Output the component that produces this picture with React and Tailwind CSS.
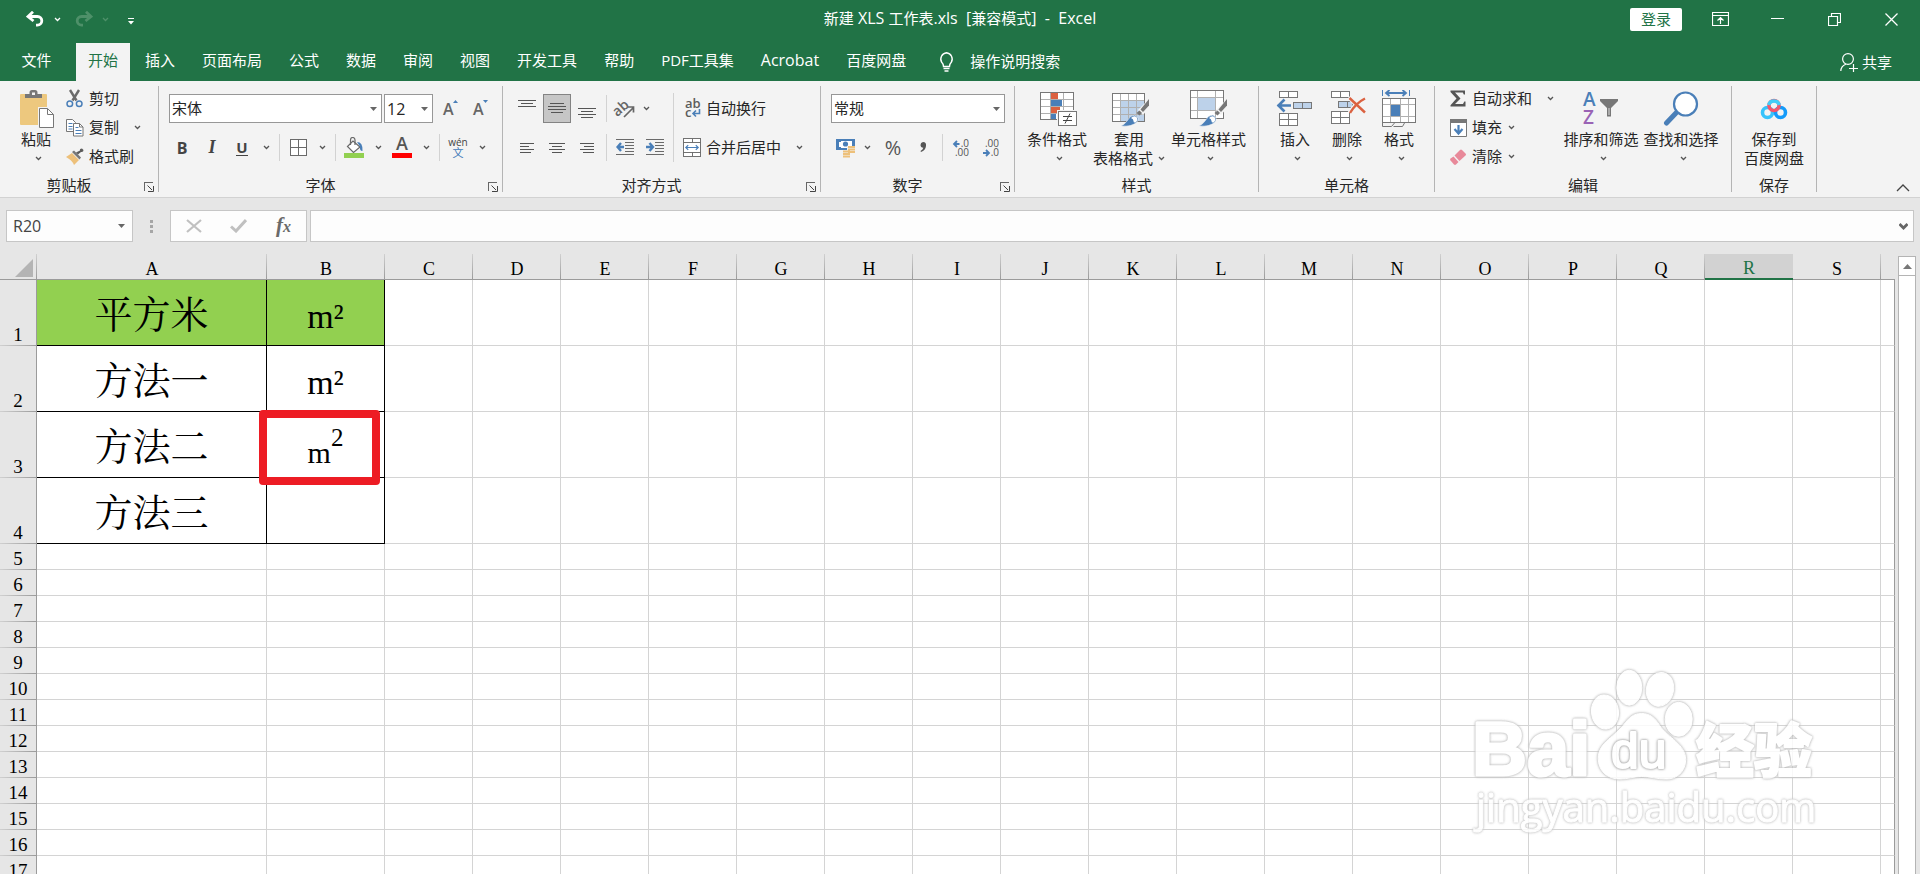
import React from "react";

const UI = "font-['Open_Sans','Noto_Sans_CJK_SC',sans-serif]";

/* ---------- small glyphs ---------- */

function Chevron({ className = "stroke-[#555555]" }) {
  return (
    <svg width="7" height="5" viewBox="0 0 7 5" fill="none" className={className} strokeWidth="1.3">
      <path d="M1 1l2.5 2.5L6 1" />
    </svg>
  );
}

function Triangle({ className = "fill-[#666666]" }) {
  return (
    <svg width="7" height="4" viewBox="0 0 7 4" className={className}>
      <path d="M0 0h7L3.500 4z" />
    </svg>
  );
}

/* ---------- ribbon building blocks ---------- */

function IconButton({ label, active, children }) {
  return (
    <button
      type="button"
      aria-label={label}
      aria-pressed={active ? true : undefined}
      className={
        active
          ? "mx-px flex h-[29px] w-7 shrink-0 items-center justify-center border border-[#838383] bg-[#c6c6c6]"
          : "flex h-[29px] w-[30px] shrink-0 items-center justify-center"
      }
    >
      {children}
    </button>
  );
}

function DropButton({ label, narrow }) {
  return (
    <button
      type="button"
      aria-label={label}
      className={
        narrow
          ? "mr-[5px] flex h-[29px] w-3 shrink-0 items-center justify-center"
          : "flex h-[29px] w-[18px] shrink-0 items-center justify-center"
      }
    >
      <Chevron />
    </button>
  );
}

function Divider() {
  return <div className="ml-1 mr-[3px] h-[27px] w-px shrink-0 bg-[#d2d2d2]" />;
}

function LineButton({ icon, label, arrow, wideArrow }) {
  return (
    <button type="button" className="flex h-[29px] items-center whitespace-nowrap">
      <span className="mr-[5px] flex w-[18px] justify-center">{icon}</span>
      {label}
      {arrow && (
        <span className={wideArrow ? "ml-[15px]" : "ml-[6px]"}>
          <Chevron />
        </span>
      )}
    </button>
  );
}

function LargeButton({ icon, label, second, arrow = true, className = "" }) {
  return (
    <button
      type="button"
      className={"flex shrink-0 flex-col items-center whitespace-nowrap pt-[6px] leading-[19px] " + className}
    >
      <span className="mb-[2px] flex h-[38px] items-center justify-center">{icon}</span>
      <span>{label}</span>
      <span className={second ? "flex h-[19px] items-center gap-[5px]" : "flex h-[19px] items-center pl-1"}>
        {second}
        {arrow && <Chevron />}
      </span>
    </button>
  );
}

function Group({ title, launcher, className = "", children }) {
  return (
    <>
      <section aria-label={title} className={"flex h-[110px] shrink-0 flex-col " + className}>
        <div className="flex flex-1">{children}</div>
        <div className="flex h-[18px] items-center leading-[18px]">
          <div className="flex-1 text-center">{title}</div>
          {launcher && (
            <button type="button" aria-label={title + "设置"} className="flex h-[18px] w-5 items-end justify-end pb-[2px] pr-1">
              <svg width="10" height="10" viewBox="0 0 10 10" fill="none" stroke="#666" shapeRendering="crispEdges">
                <path d="M.5 9V.5H9" />
                <path d="M3.500 3.500L8 8M9.500 4v5.500H4" shapeRendering="auto" stroke="#444" />
              </svg>
            </button>
          )}
        </div>
      </section>
      <div className="mt-[2px] h-[106px] w-px shrink-0 bg-[#b4b4b4]" />
    </>
  );
}

function Combo({ label, value, className }) {
  return (
    <div className={"relative " + className}>
      <select
        aria-label={label}
        defaultValue={value}
        className="h-[29px] w-full appearance-none border border-[#979797] bg-white pl-[2px] text-[#262626] outline-none"
      >
        <option>{value}</option>
      </select>
      <span className="pointer-events-none absolute right-[5px] top-[13px]">
        <Triangle />
      </span>
    </div>
  );
}

/* ---------- ribbon icons ---------- */

const PasteIcon = () => (
  <svg width="36" height="38" viewBox="-2 0 36 38">
    <rect x="0" y="4" width="27" height="31" rx="1" fill="#edc87e" />
    <path d="M5 8V4h4.500V2.500Q9.500 0 12 0h3q2.500 0 2.500 2.500V4H22v4z" fill="#777" />
    <rect x="12" y="2.500" width="3" height="2.500" fill="#f3f3f3" />
    <path d="M18 17h10l7 7v15H18z" fill="#f3f3f3" />
    <path d="M19.500 18.500h8l6 6v13h-14z" fill="#fff" stroke="#777" />
    <path d="M27.500 18.500v6h6" fill="none" stroke="#777" />
  </svg>
);

const CutIcon = () => (
  <svg width="18" height="19" viewBox="0 0 18 19" fill="none">
    <path d="M4 1l6.500 10.500M13 1L6.500 11.500" stroke="#6a6a6a" strokeWidth="2.400" />
    <circle cx="3.800" cy="14.800" r="2.800" stroke="#4a7fb8" strokeWidth="1.500" />
    <circle cx="13.200" cy="14.800" r="2.800" stroke="#4a7fb8" strokeWidth="1.500" />
  </svg>
);

const CopyIcon = () => (
  <svg width="18" height="19" viewBox="0 0 18 19">
    <path d="M.5 1.500h6l3 3v9h-9z" fill="#fff" stroke="#777" />
    <path d="M2.500 5.500h4M2.500 8.500h4M2.500 11h4" stroke="#4a7fb8" />
    <path d="M7.500 5.500h6l3.500 3.500v9H7.500z" fill="#fff" stroke="#777" />
    <path d="M13.500 5.500V9H17" fill="none" stroke="#777" />
    <path d="M9.500 9.500h3M9.500 12.500h6M9.500 15.500h6" stroke="#4a7fb8" />
  </svg>
);

const BrushIcon = () => (
  <svg width="18" height="17" viewBox="0 0 18 17">
    <path d="M0 9l6-4 7 7-5 5Q6 12 0 9z" fill="#edc07a" />
    <path d="M6 4l2-1.500 7 7-1.500 2z" fill="#777" />
    <path d="M10 4.500l2 2 3-2.500q2.500.5 2.500-2L16 .5q-2.500 0-2 2z" fill="#5c5c5c" />
  </svg>
);

function FontSizeIcon({ up }) {
  return (
    <svg width="16" height="20" viewBox="0 0 16 20" className="overflow-visible">
      <text x="0" y="16" fontSize="16" fontWeight="600" fill="#666" className={UI}>A</text>
      <path d={up ? "M10 4h5L12.500 1z" : "M10 1h5L12.500 4z"} fill="#4a7fb8" />
    </svg>
  );
}

const BorderIcon = () => (
  <svg width="17" height="17" viewBox="0 0 17 17" shapeRendering="crispEdges">
    <path d="M.5 .5h16v16H.5zM.5 8.500h16M8.500 .5v16" fill="#fff" stroke="#6a6a6a" />
  </svg>
);

const FillIcon = () => (
  <svg width="20" height="21" viewBox="0 0 20 21">
    <path d="M3.500 9.500L9 4l7 6-6.500 5.500z" fill="#fff" stroke="#6a6a6a" strokeWidth="1.200" />
    <path d="M6.500 8V3q0-2.500 2.200-2.500T11 3v5" fill="none" stroke="#6a6a6a" strokeWidth="1.200" />
    <path d="M13 5q6 0 5.500 9-3 0-2.500-4.500z" fill="#4a7fb8" />
    <rect x="0" y="16" width="20" height="5" fill="#92d050" />
  </svg>
);

const FontColorIcon = () => (
  <svg width="20" height="21" viewBox="0 0 20 21" className="overflow-visible">
    <text x="10" y="13" textAnchor="middle" fontSize="18" fontWeight="600" fill="#555" className={UI}>A</text>
    <rect x="0" y="16" width="20" height="5" fill="#ff0000" />
  </svg>
);

const PinyinIcon = () => (
  <span className="flex flex-col items-center text-[10px] leading-[9px] text-[#444444]">
    <span>wén</span>
    <span className="text-[11px] leading-[11px] text-[#3f7ab8]">文</span>
  </span>
);

function AlignIcon({ lines, height = 18 }) {
  return (
    <svg width="18" height={height} viewBox={"0 0 18 " + height} stroke="#555" shapeRendering="crispEdges">
      {lines.map(([x1, x2, y]) => (
        <path key={y} d={"M" + x1 + " " + (y + 0.5) + "H" + x2} />
      ))}
    </svg>
  );
}

const ALIGN = {
  top: [[0, 18, 0], [3, 15, 3], [0, 18, 6]],
  middle: [[2, 16, 3], [0, 18, 6], [0, 18, 9], [3, 15, 12]],
  bottom: [[0, 18, 8], [3, 15, 11], [0, 18, 14], [3, 15, 17]],
  left: [[2, 16, 4], [2, 11, 7], [2, 16, 10], [2, 13, 13]],
  center: [[1, 17, 4], [4, 14, 7], [1, 17, 10], [4, 14, 13]],
  right: [[2, 16, 4], [6, 16, 7], [2, 16, 10], [5, 16, 13]],
};

const OrientIcon = () => (
  <svg width="20" height="20" viewBox="0 0 20 20" className="overflow-visible">
    <text x="0" y="16" fontSize="14" fontWeight="600" fill="#666" transform="rotate(-42 4 14)" className={UI}>ab</text>
    <path d="M9 18L18.500 8.500M13 8h5.500v5.500" fill="none" stroke="#666" strokeWidth="1.700" />
  </svg>
);

function IndentIcon({ out }) {
  return (
    <svg width="19" height="17" viewBox="0 0 19 17">
      <path d="M0 .5h18M9 3.500h9M9 6.500h9M9 9.500h9M9 12.500h9M0 15.500h18" stroke="#6a6a6a" shapeRendering="crispEdges" />
      <path d={out ? "M1.500 8H8M5 4L1.500 8L5 12" : "M0 8h6.500M3.500 4L7 8l-3.500 4"} fill="none" stroke="#4a7fb8" strokeWidth="2.400" />
    </svg>
  );
}

const WrapIcon = () => (
  <svg width="18" height="18" viewBox="0 0 18 18" className="overflow-visible">
    <text x="2" y="8" fontSize="13" fontWeight="600" fill="#5c5c5c" className={UI}>ab</text>
    <text x="2" y="17" fontSize="13" fontWeight="600" fill="#5c5c5c" className={UI}>c</text>
    <path d="M16.500 9v4.500H10M13 10.500l-3 3 3 3" fill="none" stroke="#4a7fb8" strokeWidth="1.600" />
  </svg>
);

const MergeIcon = () => (
  <svg width="19" height="19" viewBox="0 0 19 19">
    <path d="M.5 .5h18v18H.5zM.5 4.500h18M.5 14.500h18M9.500 .5v4M9.500 14.500v4" fill="#fff" stroke="#6a6a6a" shapeRendering="crispEdges" />
    <path d="M3 9.500h13M5.500 7L3 9.500 5.500 12M13.500 7L16 9.500 13.500 12" fill="none" stroke="#4a7fb8" strokeWidth="1.300" />
  </svg>
);

const MoneyIcon = () => (
  <svg width="20" height="20" viewBox="0 0 20 20">
    <rect x="0" y="1" width="19" height="11" fill="#4a7fb8" />
    <path d="M3 3h13v7H3z" fill="#fff" />
    <circle cx="9.500" cy="6" r="2.600" fill="#4a7fb8" />
    <path d="M2 2h3v2H2zM2 9h3v2H2z" fill="#4a7fb8" />
    <path d="M11 8h9v9h-5v3H6v-8h5z" fill="#f3f3f3" />
    <path d="M12 9h7M12 11.500h7M12 14h7M7 13.500h7M7 16h7M7 18.500h7" stroke="#edc07a" strokeWidth="1.800" />
  </svg>
);

function DecimalIcon({ more }) {
  return (
    <svg width="18" height="18" viewBox="0 0 18 18" className={"overflow-visible " + UI} fontSize="10" fill="#555">
      <text x="17" y="8" textAnchor="end">{more ? ".0" : ".00"}</text>
      <text x="17" y="17" textAnchor="end">{more ? ".00" : ".0"}</text>
      <path d={more ? "M7.500 5H2.500M5 2L2 5l3 3" : "M1 14h5M4 11l3 3-3 3"} fill="none" stroke="#4a7fb8" strokeWidth="1.800" />
    </svg>
  );
}

const ConditionalIcon = () => (
  <svg width="42" height="34" viewBox="-4 0 42 34" shapeRendering="crispEdges">
    <path d="M.5 .5h33v27H.5z" fill="#fff" />
    <path d="M.5 7.500h33M.5 14.500h33M.5 21.500h33M10.500 .5v27M23.500 .5v27" stroke="#b0b0b0" fill="none" />
    <path d="M.5 .5h33v27H.5z" fill="none" stroke="#777" />
    <path d="M11 1h7v6h-7zM11 15h9v6h-9z" fill="#db6140" />
    <path d="M11 8h11v6H11zM11 22h5v5h-5z" fill="#4a7fb8" />
    <path d="M17 18h21v17H17z" fill="#f3f3f3" />
    <path d="M18.500 19.500h18v14h-18z" fill="#fff" stroke="#777" />
    <path d="M23 24.500h9M23 28.500h9M30 21.500l-5 10" stroke="#444" fill="none" shapeRendering="auto" />
  </svg>
);

const BrushOverlay = () => (
  <g>
    <path d="M38 8L26 20l5 5 7-8z" fill="#f3f3f3" />
    <path d="M37 9v6.500L31 22l-2.500-2.500z" fill="#777" />
    <path d="M27.500 20.500l2.500 2.500-2.500 2.500-3-2.500z" fill="#777" />
    <path d="M9 36q4-2 6-5 3-6 8-6 5 3 2 7-5 5-16 4z" fill="#4a7fb8" stroke="#f3f3f3" strokeWidth=".6" />
    <path d="M19 28q3-3 5.500-1 2 3-1 5.500-2 .5-2-1.500t-2.500-3z" fill="#fff" />
  </g>
);

const TableFormatIcon = () => (
  <svg width="42" height="38" viewBox="-4 0 42 38">
    <g shapeRendering="crispEdges">
      <path d="M.5 3.500h32v28H.5z" fill="#fff" />
      <path d="M9 11h23v20H9z" fill="#bdd2ea" />
      <path d="M.5 10.500h32M.5 17.500h32M.5 24.500h32M8.500 3.500v28M16.500 3.500v28M24.500 3.500v28" stroke="#b0b0b0" fill="none" />
      <path d="M.5 3.500h32v28H.5z" fill="none" stroke="#777" />
    </g>
    <BrushOverlay />
  </svg>
);

const CellStyleIcon = () => (
  <svg width="38" height="38" viewBox="0 0 38 38">
    <g shapeRendering="crispEdges">
      <path d="M.5 .5h33v28H.5z" fill="#fff" />
      <path d="M.5 7.500h33M.5 20.500h33M7.500 .5v28M25.500 .5v28" stroke="#b0b0b0" fill="none" />
      <path d="M8 8h17v12H8z" fill="#bdd2ea" />
      <path d="M.5 .5h33v28H.5z" fill="none" stroke="#777" />
    </g>
    <BrushOverlay />
  </svg>
);

const InsertIcon = () => (
  <svg width="40" height="38" viewBox="0 0 40 38">
    <g shapeRendering="crispEdges" fill="#fff" stroke="#777">
      <path d="M4.500 1.500h18v6h-18zM13.500 1.500v6M4.500 23.500h18v12h-18zM4.500 29.500h18M13.500 23.500v12" />
      <path d="M18.500 12.500h18v6h-18zM27.500 12.500v6" fill="#bdd2ea" />
    </g>
    <path d="M2.500 15.500H16M9.500 9.500l-6 6 6 6" fill="none" stroke="#4a7fb8" strokeWidth="2.600" />
  </svg>
);

const DeleteIcon = () => (
  <svg width="40" height="38" viewBox="-2 0 40 38">
    <g shapeRendering="crispEdges" fill="#fff" stroke="#777">
      <path d="M2.500 1.500h18v6h-18zM11.500 1.500v6M2.500 21.500h18v12h-18zM2.500 27.500h18M11.500 21.500v12" />
      <path d="M9.500 11.500h14v6h-14zM18.500 11.500v6" fill="#bdd2ea" />
    </g>
    <path d="M20 7l16 16M36 7q-9 6-15 16" fill="none" stroke="#f3f3f3" strokeWidth="5" />
    <path d="M20.500 8L36 22.500" stroke="#db6140" strokeWidth="2.400" />
    <path d="M36 8.500Q27 13 21 23" fill="none" stroke="#db6140" strokeWidth="2.400" />
  </svg>
);

const FormatIcon = () => (
  <svg width="34" height="38" viewBox="0 0 34 38">
    <g shapeRendering="crispEdges">
      <path d="M.5 8.500h33v24H.5z" fill="#fff" />
      <path d="M.5 14.500h33M.5 26.500h33M8.500 8.500v24M18.500 8.500v24M26.500 8.500v24" stroke="#b0b0b0" fill="none" />
      <path d="M.5 8.500h33v24H.5z" fill="none" stroke="#777" />
      <path d="M9 15h9v11H9z" fill="#4a7fb8" />
      <path d="M.5 0v6M27.500 0v6" stroke="#4a7fb8" />
    </g>
    <path d="M4 3h20M7.500 0L4 3l3.500 3M20.500 0L24 3l-3.500 3" fill="none" stroke="#4a7fb8" strokeWidth="1.800" />
    <path d="M.5 33v3.500h9l3-3.500M11.500 36.500h9l2-3.500" fill="none" stroke="#777" />
  </svg>
);

const SumIcon = () => (
  <svg width="16" height="17" viewBox="0 0 16 17">
    <path d="M.5 .5h14.500v4h-1.200l-1-2H5l5.500 6L5 14h8l1.300-2.500h1.200v5H.5v-1.200l6-6.800L.5 2z" fill="#555" />
  </svg>
);

const FillDownIcon = () => (
  <svg width="17" height="18" viewBox="0 0 17 18">
    <path d="M.5 .5h16v17H.5z" fill="#fff" stroke="#777" />
    <path d="M0 0h17v4H0z" fill="#777" />
    <path d="M8.500 6v8M4.500 10l4 4.500 4-4.500" fill="none" stroke="#4a7fb8" strokeWidth="2.200" />
  </svg>
);

const EraserIcon = () => (
  <svg width="16" height="16" viewBox="0 0 16 16" fill="#e8899a">
    <path d="M4.500 6.500L10 1q1-1 2 0l3.500 3.500q1 1 0 2L9.500 12z" />
    <path d="M3.500 7.500l5 5.500L6 15.500q-1 .8-2 0L.5 11.500q-.8-1 0-2z" />
  </svg>
);

const SortIcon = () => (
  <svg width="36" height="34" viewBox="0 0 36 34" className={"overflow-visible " + UI}>
    <text x="0" y="14" fontSize="19" fontWeight="600" fill="#4a7fb8">A</text>
    <text x="0" y="32" fontSize="19" fontWeight="600" fill="#9a63b5">Z</text>
    <path d="M17 7h18v2l-7 7v8.500h-4V16l-7-7z" fill="#777" />
    <path d="M26 16v7" stroke="#ddd" />
  </svg>
);

const FindIcon = () => (
  <svg width="36" height="36" viewBox="0 0 36 36">
    <path d="M13 22L3.500 32" stroke="#4a7fb8" strokeWidth="5" strokeLinecap="round" />
    <circle cx="22.500" cy="13" r="11.500" fill="#fff" stroke="#4a7fb8" strokeWidth="2.200" />
  </svg>
);

const CloudIcon = () => (
  <svg width="28" height="22" viewBox="0 0 28 22" fill="none" strokeWidth="3.600">
    <circle cx="7.500" cy="14.500" r="5" stroke="#37c3fb" />
    <circle cx="20.500" cy="14.500" r="5" stroke="#149bfa" />
    <circle cx="14" cy="7.500" r="5" stroke="#f4566c" />
    <path d="M8.700 7a5.500 5.500 0 0 1 10.600 0" stroke="#41cdf8" />
  </svg>
);

/* ---------- page sections ---------- */

function TitleBar() {
  return (
    <div className="grid h-[38px] grid-cols-[1fr_auto_1fr] items-center">
      <div className="flex items-center pl-[26px]">
        <button type="button" aria-label="撤消">
          <svg width="19" height="16" viewBox="0 0 19 16" fill="none" stroke="#fff" strokeWidth="2.800">
            <path d="M2 5.500h9.500a4.300 4.300 0 0 1 0 8.600H10M7 .8L2 5.500 7.500 10" />
          </svg>
        </button>
        <button type="button" aria-label="撤消列表" className="ml-[9px]">
          <Chevron className="stroke-white" />
        </button>
        <button type="button" aria-label="恢复" className="ml-[13px]">
          <svg width="19" height="16" viewBox="0 0 19 16" fill="none" stroke="#4e9069" strokeWidth="2.800">
            <path d="M17 5.500H7.500a4.300 4.300 0 0 0 0 8.600H9M12 .8l5 4.700-5.500 4.500" />
          </svg>
        </button>
        <button type="button" aria-label="恢复列表" className="ml-[9px]">
          <Chevron className="stroke-[#4e9069]" />
        </button>
        <button type="button" aria-label="自定义快速访问工具栏" className="ml-[19px] mt-[5px]">
          <svg width="6" height="7" viewBox="0 0 6 7" fill="#fff">
            <path d="M0 0h6v1H0zM0 3h6L3 6.500z" />
          </svg>
        </button>
      </div>
      <h1 className="whitespace-pre pb-[2px] leading-5 text-white">
        新建<span className="text-base leading-5"> XLS </span>工作表
        <span className="text-base leading-5">.xls  [</span>兼容模式
        <span className="text-base leading-5">]  -  Excel</span>
      </h1>
      <div className="flex items-center justify-end text-white">
        <button type="button" className="mr-[10px] h-[23px] w-[52px] rounded-[2px] bg-white leading-[22px] text-[#217346]">
          登录
        </button>
        <button type="button" aria-label="功能区显示选项" className="flex h-[38px] w-[57px] items-center justify-center">
          <svg width="17" height="14" viewBox="0 0 17 14" fill="none" stroke="currentColor">
            <path d="M.5 .5h16v13H.5zM.5 3.500h16M8.500 12V5.500M5.500 8.500l3-3 3 3" strokeWidth="1.200" />
          </svg>
        </button>
        <button type="button" aria-label="最小化" className="flex h-[38px] w-[57px] items-center justify-center">
          <svg width="13" height="2" viewBox="0 0 13 2" fill="currentColor">
            <path d="M0 0h13v1H0z" />
          </svg>
        </button>
        <button type="button" aria-label="还原" className="flex h-[38px] w-[57px] items-center justify-center">
          <svg width="13" height="13" viewBox="0 0 13 13" fill="none" stroke="currentColor" strokeWidth="1.200">
            <path d="M.5 3.500h9v9h-9zM3.500 3.500v-3h9v9h-3" />
          </svg>
        </button>
        <button type="button" aria-label="关闭" className="flex h-[38px] w-[57px] items-center justify-center">
          <svg width="13" height="13" viewBox="0 0 13 13" fill="none" stroke="currentColor" strokeWidth="1.300">
            <path d="M.5 .5l12 12M12.500 .5l-12 12" />
          </svg>
        </button>
      </div>
    </div>
  );
}

const TABS = ["开始", "插入", "页面布局", "公式", "数据", "审阅", "视图", "开发工具", "帮助", "PDF工具集", "Acrobat", "百度网盘"];

function tabClass(tab) {
  if (tab === "开始") return "ml-[3px] h-[38px] bg-[#f3f3f3] px-3 pb-1 text-[#217346]";
  if (tab === "Acrobat") return "ml-[3px] h-[38px] px-3 pb-1 text-base";
  return "ml-[3px] h-[38px] px-3 pb-1";
}

function TabBar() {
  return (
    <nav className="flex items-stretch whitespace-nowrap pt-[5px] text-white">
      <button type="button" className="h-[38px] w-[73px] pb-1">文件</button>
      {TABS.map((tab) => (
        <button key={tab} type="button" aria-current={tab === "开始" ? "page" : undefined} className={tabClass(tab)}>
          {tab}
        </button>
      ))}
      <button type="button" className="ml-[21px] flex h-[38px] items-center gap-4 pb-px">
        <svg width="15" height="20" viewBox="0 0 15 20" fill="none" stroke="#fff" strokeWidth="1.400">
          <path d="M4.500 14.500q0-2.500-1.800-4.200A6.300 6.300 0 0 1 7.500.8a6.300 6.300 0 0 1 4.800 9.500Q10.500 12 10.500 14.500z" />
          <path d="M4.500 16.500h6M5.500 19h4" strokeWidth="1.600" />
        </svg>
        操作说明搜索
      </button>
      <button type="button" className="ml-auto mr-7 flex h-[38px] items-center gap-1">
        <svg width="18" height="19" viewBox="0 0 18 19" fill="none" stroke="#fff" strokeWidth="1.200">
          <circle cx="8" cy="6" r="5.400" />
          <path d="M.8 18q.2-5 5-6.800M9 15.500h9M13.500 11v8" />
        </svg>
        共享
      </button>
    </nav>
  );
}

function Ribbon() {
  return (
    <div className="flex overflow-hidden border-b border-[#d2d2d2] bg-[#f3f3f3] pb-[3px] pt-[3px] text-[#262626]">
      <Group title="剪贴板" launcher className="w-[158px]">
        <LargeButton icon={<PasteIcon />} label="粘贴" className="ml-3 w-12" />
        <div className="ml-[6px] flex flex-col">
          <LineButton icon={<CutIcon />} label="剪切" />
          <LineButton icon={<CopyIcon />} label="复制" arrow wideArrow />
          <LineButton icon={<BrushIcon />} label="格式刷" />
        </div>
      </Group>

      <Group title="字体" launcher className="w-[343px]">
        <div className="flex flex-col gap-[10px] pl-2 pt-[10px]">
          <div className="flex items-center pl-[2px]">
            <Combo label="字体" value="宋体" className="w-[213px]" />
            <Combo label="字号" value="12" className="ml-[2px] w-[49px] text-base" />
            <span className="ml-[3px] flex">
              <IconButton label="增大字号"><FontSizeIcon up /></IconButton>
              <IconButton label="减小字号"><FontSizeIcon /></IconButton>
            </span>
          </div>
          <div className="flex items-center text-[#444444]">
            <IconButton label="加粗"><b className="text-base">B</b></IconButton>
            <IconButton label="倾斜">
              <b className="font-['Liberation_Serif',serif] text-[18px] italic">I</b>
            </IconButton>
            <IconButton label="下划线">
              <b className="border-b border-[#444444] text-[15px] leading-4">U</b>
            </IconButton>
            <DropButton label="下划线样式" />
            <Divider />
            <IconButton label="边框"><BorderIcon /></IconButton>
            <DropButton label="边框样式" />
            <Divider />
            <IconButton label="填充颜色"><FillIcon /></IconButton>
            <DropButton label="更多填充颜色" />
            <IconButton label="字体颜色"><FontColorIcon /></IconButton>
            <DropButton label="更多字体颜色" />
            <Divider />
            <IconButton label="拼音字段"><PinyinIcon /></IconButton>
            <DropButton label="拼音设置" />
          </div>
        </div>
      </Group>

      <Group title="对齐方式" launcher className="w-[317px]">
        <div className="flex flex-col gap-[10px] pl-[9px] pt-[10px]">
          <div className="flex items-center">
            <IconButton label="顶端对齐"><span className="pb-[10px]"><AlignIcon lines={ALIGN.top} height={8} /></span></IconButton>
            <IconButton label="垂直居中" active><AlignIcon lines={ALIGN.middle} /></IconButton>
            <IconButton label="底端对齐"><AlignIcon lines={ALIGN.bottom} /></IconButton>
            <Divider />
            <IconButton label="方向"><OrientIcon /></IconButton>
            <DropButton label="方向选项" narrow />
          </div>
          <div className="flex items-center">
            <IconButton label="左对齐"><AlignIcon lines={ALIGN.left} /></IconButton>
            <IconButton label="居中"><AlignIcon lines={ALIGN.center} /></IconButton>
            <IconButton label="右对齐"><AlignIcon lines={ALIGN.right} /></IconButton>
            <Divider />
            <IconButton label="减少缩进量"><IndentIcon out /></IconButton>
            <IconButton label="增加缩进量"><IndentIcon /></IconButton>
          </div>
        </div>
        <div className="ml-[3px] mt-[9px] h-[69px] w-px bg-[#d2d2d2]" />
        <div className="flex flex-col gap-[10px] pl-[9px] pt-[10px]">
          <LineButton icon={<WrapIcon />} label="自动换行" />
          <div className="flex items-center">
            <LineButton icon={<MergeIcon />} label="合并后居中" />
            <span className="ml-[9px] flex"><DropButton label="合并选项" /></span>
          </div>
        </div>
      </Group>

      <Group title="数字" launcher className="w-[193px]">
        <div className="flex flex-col gap-[10px] pl-[10px] pt-[10px]">
          <Combo label="数字格式" value="常规" className="w-[174px]" />
          <div className="flex items-center text-[#555555]">
            <IconButton label="会计数字格式"><MoneyIcon /></IconButton>
            <DropButton label="更多会计格式" narrow />
            <IconButton label="百分比样式"><span className="text-[20px]">%</span></IconButton>
            <IconButton label="千位分隔样式">
              <svg width="7" height="11" viewBox="0 0 7 11" fill="#555">
                <path d="M3 0q3.500 0 3 4-.5 4.500-5 6l-.5-1q2.500-1.200 2.800-3.200Q.5 5.500.5 3T3 0z" />
              </svg>
            </IconButton>
            <Divider />
            <IconButton label="增加小数位数"><DecimalIcon more /></IconButton>
            <IconButton label="减少小数位数"><DecimalIcon /></IconButton>
          </div>
        </div>
      </Group>

      <Group title="样式" className="w-[243px]">
        <LargeButton icon={<ConditionalIcon />} label="条件格式" className="ml-2 w-[68px]" />
        <LargeButton icon={<TableFormatIcon />} label="套用" second="表格格式" className="w-[76px]" />
        <LargeButton icon={<CellStyleIcon />} label="单元格样式" className="w-[83px]" />
      </Group>

      <Group title="单元格" className="w-[175px]">
        <LargeButton icon={<InsertIcon />} label="插入" className="ml-[10px] w-[52px]" />
        <LargeButton icon={<DeleteIcon />} label="删除" className="w-[52px]" />
        <LargeButton icon={<FormatIcon />} label="格式" className="w-[52px]" />
      </Group>

      <Group title="编辑" className="w-[296px]">
        <div className="ml-[14px] flex w-[110px] flex-col items-start">
          <LineButton icon={<SumIcon />} label="自动求和" arrow wideArrow />
          <LineButton icon={<FillDownIcon />} label="填充" arrow />
          <LineButton icon={<EraserIcon />} label="清除" arrow />
        </div>
        <LargeButton icon={<SortIcon />} label="排序和筛选" className="ml-[2px] w-20" />
        <LargeButton icon={<FindIcon />} label="查找和选择" className="w-20" />
      </Group>

      <Group title="保存" className="w-[84px]">
        <LargeButton icon={<CloudIcon />} label="保存到" second="百度网盘" arrow={false} className="w-[84px]" />
      </Group>

      <button type="button" aria-label="折叠功能区" className="ml-auto mr-[10px] self-end pb-[2px]">
        <svg width="14" height="8" viewBox="0 0 14 8" fill="none" stroke="#444" strokeWidth="1.300">
          <path d="M1 7l6-6 6 6" />
        </svg>
      </button>
    </div>
  );
}

function FormulaBar() {
  return (
    <div className="flex items-center bg-[#e6e6e6] px-[6px] py-3">
      <div className="flex h-8 w-[127px] items-center border border-[#c6c6c6] bg-[#fdfdfd]">
        <input
          aria-label="名称框"
          defaultValue="R20"
          className="h-full w-0 flex-1 bg-transparent pl-[6px] text-base text-[#444444] outline-none"
        />
        <button type="button" aria-label="名称列表" className="flex h-full w-[22px] items-center justify-center">
          <Triangle />
        </button>
      </div>
      <svg width="3" height="13" viewBox="0 0 3 13" fill="#a6a6a6" className="mx-[17px]">
        <path d="M0 0h3v3H0zM0 5h3v3H0zM0 10h3v3H0z" />
      </svg>
      <div className="flex h-8 w-[137px] items-center justify-around border border-[#c6c6c6] bg-[#fdfdfd]">
        <button type="button" aria-label="取消" className="flex w-9 justify-center">
          <svg width="16" height="14" viewBox="0 0 16 14" fill="none" stroke="#c0c0c0" strokeWidth="2.200">
            <path d="M1 1l14 12M15 1L1 13" />
          </svg>
        </button>
        <button type="button" aria-label="输入" className="flex w-9 justify-center">
          <svg width="17" height="14" viewBox="0 0 17 14" fill="none" stroke="#c0c0c0" strokeWidth="3">
            <path d="M1 7.500l5 4.500L16 1" />
          </svg>
        </button>
        <button
          type="button"
          aria-label="插入函数"
          className="flex w-9 items-baseline justify-center font-['Liberation_Serif',serif] text-[21px] font-bold italic leading-6 text-[#6a6a6a]"
        >
          <span>f</span>
          <span className="text-base">x</span>
        </button>
      </div>
      <div className="ml-[3px] flex h-8 min-w-0 flex-1 items-center border border-[#c6c6c6] bg-[#fdfdfd]">
        <input aria-label="编辑栏" className="h-full w-0 flex-1 bg-transparent px-2 outline-none" />
        <button type="button" aria-label="展开编辑栏" className="flex h-full w-5 items-center justify-center">
          <svg width="9" height="7" viewBox="0 0 9 7" fill="none" stroke="#666" strokeWidth="2.800">
            <path d="M.5 1l4 4 4-4" />
          </svg>
        </button>
      </div>
    </div>
  );
}

const COLUMNS = "ABCDEFGHIJKLMNOPQRS".split("");
const ROWS = Array.from({ length: 17 }, (_, i) => i + 1);

const CELLS = {
  A1: "平方米",
  A2: "方法一",
  A3: "方法二",
  A4: "方法三",
  B1: <span className="text-[34px] leading-none">m²</span>,
  B2: <span className="text-[34px] leading-none">m²</span>,
  B3: (
    <span className="text-[30px] leading-none">
      m<sup className="static align-[17px] text-[25px] leading-none">2</sup>
    </span>
  ),
};

function cellClass(col, row) {
  const base = "p-0 text-center align-middle border-r border-b ";
  if ((col === "A" || col === "B") && row <= 4) {
    const fill = row === 1 ? "bg-[#92d050] " : "bg-white ";
    const layer = col === "B" && row === 3 ? "relative z-10 " : "";
    return base + fill + layer + "border-black pt-[5px] text-[38px] leading-none text-black";
  }
  return base + "border-[#d4d4d4]";
}

function Sheet() {
  return (
    <div className="min-w-0 flex-1 overflow-hidden">
      <table className="w-full table-fixed border-separate border-spacing-0 font-['Liberation_Serif','Noto_Serif_CJK_SC','Noto_Sans_CJK_SC',serif]">
        <colgroup>
          <col className="w-[37px]" />
          <col className="w-[230px]" />
          <col className="w-[118px]" />
          {COLUMNS.slice(2).map((c) => (
            <col key={c} className="w-[88px]" />
          ))}
          <col />
        </colgroup>
        <thead>
          <tr className="h-[26px]">
            <th className="border-b border-[#9b9b9b] bg-[#e6e6e6] bg-[linear-gradient(to_bottom,#d0d0d0,#9b9b9b)] bg-[length:1px_100%] bg-right bg-no-repeat p-0" aria-label="全选">
              <svg width="18" height="18" viewBox="0 0 18 18" className="ml-[15px] mt-[3px]">
                <path d="M18 0v18H0z" fill="#b4b4b4" />
              </svg>
            </th>
            {COLUMNS.map((c) => (
              <th
                key={c}
                className={
                  c === "R"
                    ? "border-b-2 border-[#217346] bg-[#d2d2d2] p-0 pt-[5px] text-[18px] font-normal leading-[19px] text-[#217346]"
                    : "border-b border-[#9b9b9b] bg-[#e6e6e6] bg-[linear-gradient(to_bottom,#d0d0d0,#9b9b9b)] bg-[length:1px_100%] bg-right bg-no-repeat p-0 pt-[6px] text-[18px] font-normal leading-[19px] text-black"
                }
              >
                {c}
              </th>
            ))}
            <th className="border-b border-[#9b9b9b] bg-[#e6e6e6] p-0" aria-label="T" />
          </tr>
        </thead>
        <tbody>
          {ROWS.map((r) => (
            <tr key={r} className={r <= 4 ? "h-[66px]" : "h-[26px]"}>
              <th className="border-r border-[#9b9b9b] bg-[#e6e6e6] bg-[linear-gradient(to_right,#d0d0d0,#9b9b9b)] bg-[length:100%_1px] bg-bottom bg-no-repeat p-0 pb-px align-bottom text-[19px] font-normal leading-5 text-black">
                {r}
              </th>
              {COLUMNS.map((c) => (
                <td key={c} className={cellClass(c, r)}>
                  {CELLS[c + r]}
                  {c + r === "B3" && (
                    <span className="absolute -bottom-2 -left-2 -top-[2px] right-1 rounded-[4px] border-8 border-[#ed1c24]" />
                  )}
                </td>
              ))}
              <td className="border-b border-r border-b-[#d4d4d4] border-r-[#9b9b9b] p-0" />
            </tr>
          ))}
        </tbody>
      </table>
    </div>
  );
}

function ScrollBar() {
  return (
    <div className="flex w-[25px] shrink-0 flex-col bg-[#e6e6e6] pl-[3px] pr-1 pt-[2px]">
      <button type="button" aria-label="向上滚动" className="flex h-5 items-center justify-center border border-[#b4b4b4] bg-white">
        <svg width="9" height="5" viewBox="0 0 9 5" fill="#777">
          <path d="M0 5h9L4.500 0z" />
        </svg>
      </button>
      <div className="flex-1 border-x border-[#b4b4b4] bg-white" />
    </div>
  );
}

function Watermark() {
  return (
    <svg
      width="350"
      height="172"
      viewBox="0 0 350 172"
      className="pointer-events-none absolute bottom-[37px] right-[100px] overflow-visible font-['Liberation_Sans','Noto_Sans_CJK_SC',sans-serif] opacity-85"
      fill="#fff"
      stroke="#fff"
      strokeLinejoin="round"
    >
      <g className="[filter:drop-shadow(0_0_1px_#b0b0b0)_drop-shadow(0_0_1px_#d0d0d0)]">
        <text x="2" y="110" fontSize="76" fontWeight="700" strokeWidth="3">Bai</text>
        <ellipse cx="135" cy="47" rx="13.500" ry="17" transform="rotate(-6 135 47)" />
        <ellipse cx="159.300" cy="22.700" rx="12.500" ry="17.500" />
        <ellipse cx="190" cy="24.300" rx="13.500" ry="17" transform="rotate(12 190 24.300)" />
        <ellipse cx="208.700" cy="54.300" rx="13.500" ry="17" />
        <path d="M171.700 48.500c8 0 13 4 18 12 8 12 26 19 26 34 0 12-9 20-20 19.500-8 0-16-2.500-24-2.500s-14 2.500-22 2.500c-13 0-21.500-9-21.500-20.500 0-15 14-20 25-33 6-8 10-12 18.500-12z" />
        <text x="226" y="107" fontSize="58" fontWeight="900" strokeWidth="2">经验</text>
      </g>
      <text x="141" y="103" fontSize="50" strokeWidth="2" className="[filter:drop-shadow(0_0_1px_#999)_drop-shadow(0_0_1px_#b8b8b8)]">du</text>
      <text
        x="6"
        y="157"
        fontSize="40"
        strokeWidth="1"
        className="font-['Open_Sans',sans-serif] [filter:drop-shadow(0_0_1px_#b8b8b8)_drop-shadow(0_0_1px_#dcdcdc)]"
      >
        jingyan.baidu.com
      </text>
    </svg>
  );
}

export default function App() {
  return (
    <div className={"flex h-screen flex-col overflow-hidden bg-white text-[15px] " + UI}>
      <header className="shrink-0">
        <div className="bg-[#217346]">
          <TitleBar />
          <TabBar />
        </div>
        <Ribbon />
        <FormulaBar />
      </header>
      <main className="relative flex min-h-0 flex-1">
        <Sheet />
        <ScrollBar />
        <Watermark />
      </main>
    </div>
  );
}
